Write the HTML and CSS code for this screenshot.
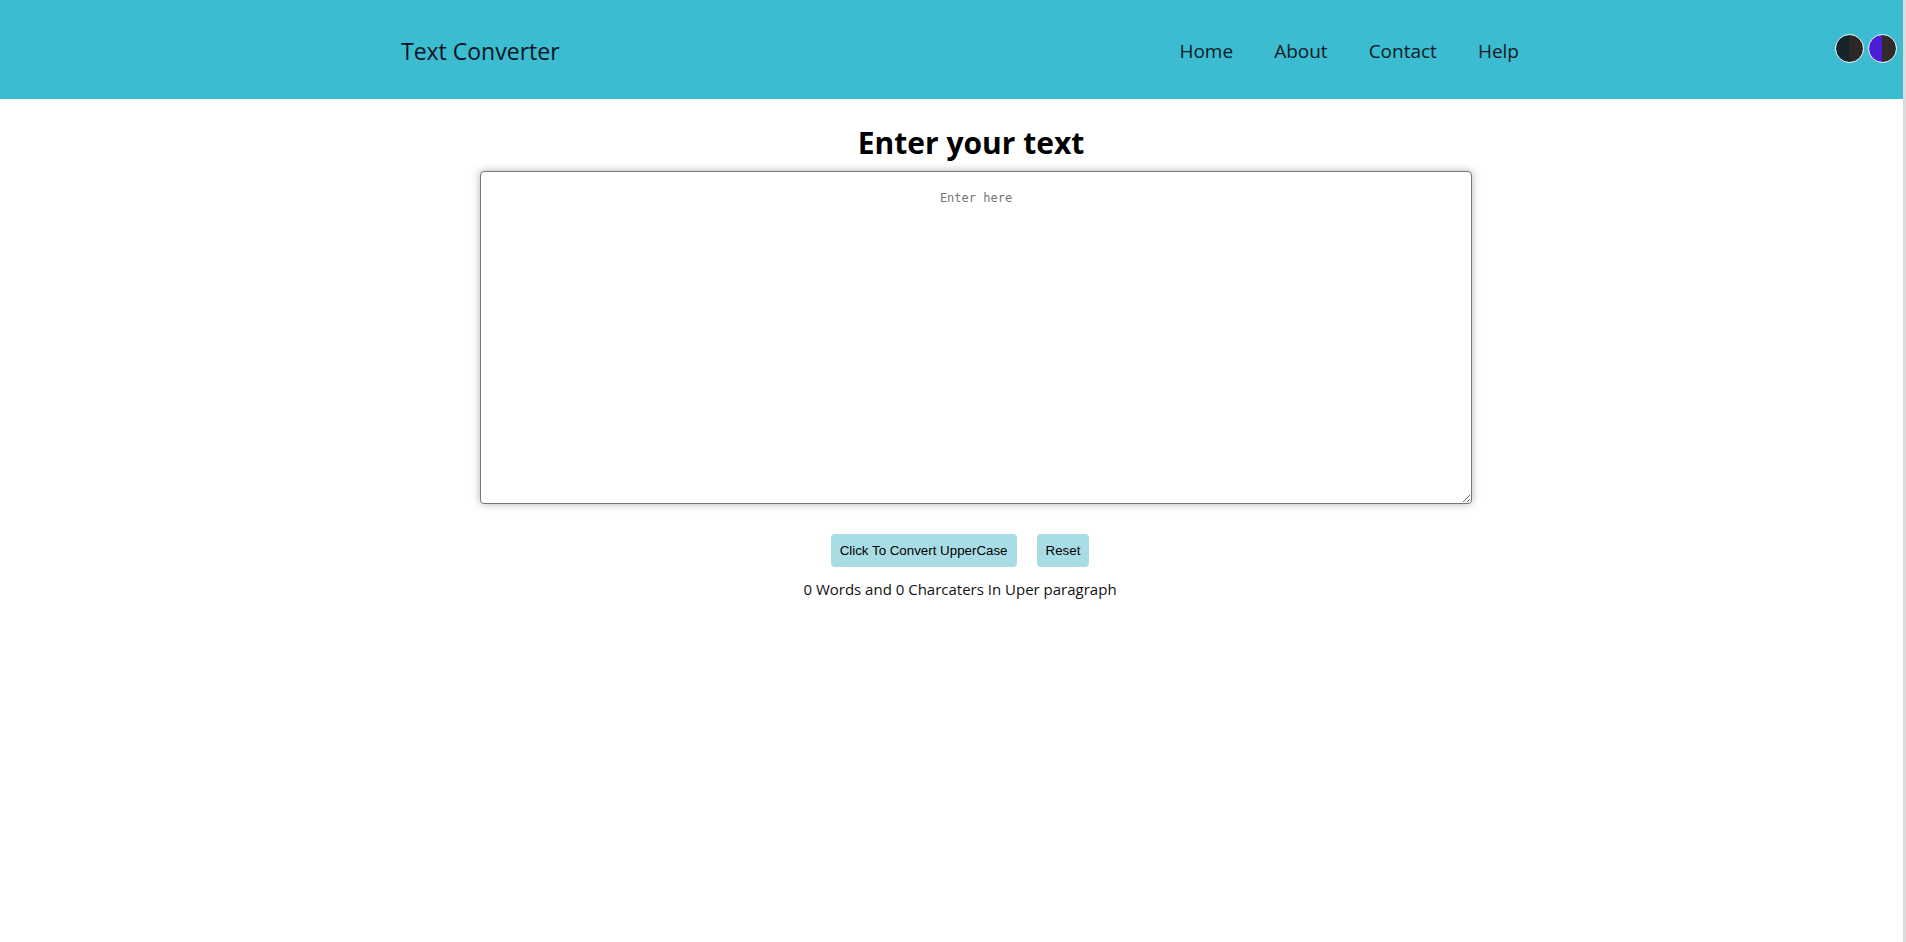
FILE: index.html
```html
<!DOCTYPE html>
<html lang="en">
<head>
<meta charset="utf-8">
<title>Text Converter</title>
<link rel="stylesheet" href="styles.css">
</head>
<body>
<div class="page">
  <header class="topbar">
    <a class="brand" href="#">Text Converter</a>
    <nav class="nav">
      <a href="#">Home</a>
      <a href="#">About</a>
      <a href="#">Contact</a>
      <a href="#">Help</a>
    </nav>
    <div class="themes">
      <span class="swatch swatch-dark"></span>
      <span class="swatch swatch-purple"></span>
    </div>
  </header>
  <main class="main">
    <h2 class="title">Enter your text</h2>
    <textarea class="box" placeholder="Enter here"></textarea>
    <div class="actions">
      <button class="btn btn-wide">Click To Convert UpperCase</button>
      <button class="btn">Reset</button>
    </div>
    <p class="count">0 Words and 0 Charcaters In Uper paragraph</p>
  </main>
</div>
</body>
</html>
```
FILE: styles.css
```css
html {
  background: #dcdcdc;
}
body {
  margin: 0;
  font-family: "Open Sans", "Noto Sans", sans-serif;
  color: #212529;
}
.page {
  width: calc(100% - 3px);
  min-height: 100vh;
  background: #ffffff;
}
.topbar {
  height: 99px;
  background: #3bbcd0;
  display: flex;
  align-items: center;
  padding-left: 401px;
  padding-right: 6px;
  box-sizing: border-box;
}
.brand {
  font-size: 23px;
  color: #0b1424;
  text-decoration: none;
  margin-top: 2px;
}
.nav {
  margin-left: auto;
  display: flex;
  gap: 41px;
  margin-top: 2px;
}
.nav a {
  font-size: 19px;
  color: #0f1a26;
  text-decoration: none;
}
.themes {
  display: flex;
  gap: 4px;
  margin-left: 316px;
  margin-top: -3px;
}
.swatch {
  width: 27px;
  height: 27px;
  border-radius: 50%;
  border: 1.5px solid #f4fbfd;
  display: block;
}
.swatch-dark {
  background: linear-gradient(to right, #14262b 50%, #2c2626 50%);
}
.swatch-purple {
  background: linear-gradient(to right, #4a1ed8 50%, #312b2c 50%);
}
.main {
  margin-left: 480px;
  width: 992px;
  display: flex;
  flex-direction: column;
}
.title {
  margin: 25px 0 0 0;
  padding-right: 10px;
  text-align: center;
  font-size: 30px;
  font-weight: 700;
  line-height: 38px;
  color: #000;
}
.box {
  margin-top: 9px;
  height: 333px;
  box-sizing: border-box;
  border: 1px solid #767676;
  border-radius: 4px;
  box-shadow: 0 0 9px rgba(0, 0, 0, 0.3);
  padding: 19px 8px;
  font-family: "DejaVu Sans Mono", "Liberation Mono", monospace;
  font-size: 12px;
  text-align: center;
  resize: both;
}
.box::placeholder {
  color: #757575;
}
.actions {
  display: flex;
  justify-content: center;
  gap: 20px;
  margin-top: 30px;
  padding-right: 32px;
}
.btn {
  font-family: "Liberation Sans", Arial, sans-serif;
  font-size: 13.333px;
  color: #000;
  background: #a9dde5;
  border: none;
  border-radius: 4px;
  height: 33px;
  padding: 0 9px;
}
.count {
  margin: 12px 0 0 0;
  padding-right: 32px;
  text-align: center;
  font-size: 15px;
  color: #111;
}
```
